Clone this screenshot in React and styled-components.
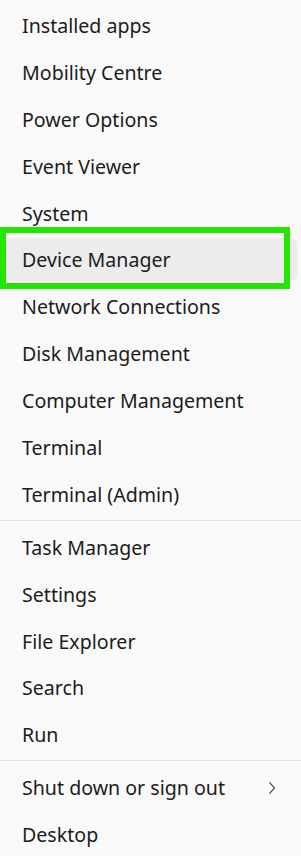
import React from 'react'
import styled, { createGlobalStyle } from 'styled-components'

const GlobalStyle = createGlobalStyle`
    html, body {
        margin: 0;
        padding: 0;
        background: #f9f9f9;
    }
`

const groups = [
    ['Installed apps', 'Mobility Centre', 'Power Options', 'Event Viewer', 'System',
        'Device Manager', 'Network Connections', 'Disk Management', 'Computer Management',
        'Terminal', 'Terminal (Admin)'],
    ['Task Manager', 'Settings', 'File Explorer', 'Search', 'Run'],
    ['Shut down or sign out', 'Desktop'],
]

function App() {
    return (
        <>
            <GlobalStyle />
            <Menu>
                {groups.map((items, gi) => (
                    <React.Fragment key={gi}>
                        {gi > 0 && <Separator />}
                        {items.map((label) => (
                            <Item key={label} $hovered={label === 'Device Manager'}>
                                <span>{label}</span>
                                {label === 'Shut down or sign out' && (
                                    <Chevron viewBox="0 0 8 14">
                                        <path d="M1.5 1.5 L6.5 7 L1.5 12.5" />
                                    </Chevron>
                                )}
                            </Item>
                        ))}
                    </React.Fragment>
                ))}
            </Menu>
        </>
    )
}

export default App

const Menu = styled.div`
    width: 301px;
    height: 856px;
    box-sizing: border-box;
    padding-top: 2px;
    display: flex;
    flex-direction: column;
    background: #f9f9f9;
    font-family: "Noto Sans", "Open Sans", sans-serif;
    overflow: hidden;
`

const Item = styled.div`
    position: relative;
    height: 46.9px;
    flex-shrink: 0;
    display: flex;
    align-items: center;
    justify-content: space-between;
    padding: 0 25px 0 22px;
    font-size: 19.6px;
    color: #1c1c1c;

    &::before {
        content: '';
        position: absolute;
        left: 5px;
        right: 4px;
        top: 2px;
        bottom: 2px;
        border-radius: 6px;
        background: ${(p) => (p.$hovered ? '#ececec' : 'transparent')};
        z-index: 0;
    }

    &::after {
        content: '';
        display: ${(p) => (p.$hovered ? 'block' : 'none')};
        position: absolute;
        left: 0;
        width: 290px;
        top: -9px;
        height: 62px;
        box-sizing: border-box;
        border: 6px solid #22e600;
    }

    span {
        position: relative;
        z-index: 1;
    }
`

const Separator = styled.div`
    height: 1px;
    flex-shrink: 0;
    margin: 2px 0 3px;
    background: #e3e3e3;
`

const Chevron = styled.svg`
    width: 8px;
    height: 14px;
    fill: none;
    stroke: #5a5a5a;
    stroke-width: 1.3;
    position: relative;
    z-index: 1;
`
